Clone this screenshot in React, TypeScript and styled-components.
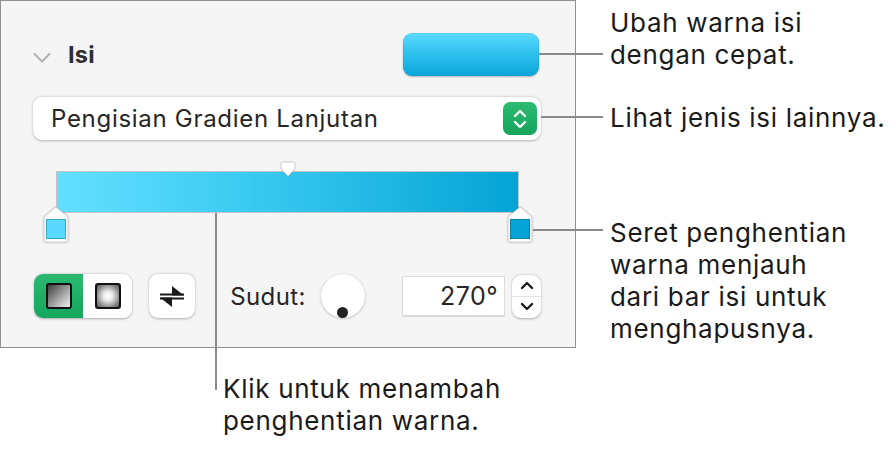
import React from "react";
import styled, { createGlobalStyle } from "styled-components";

const GlobalStyle = createGlobalStyle`
  html, body { margin: 0; padding: 0; background: #ffffff; }
  body { font-family: Inter, "Noto Sans", "Liberation Sans", sans-serif; -webkit-font-smoothing: antialiased; }
`;

const Stage = styled.div`
  position: relative;
  width: 894px;
  height: 452px;
  display: grid;
  grid-template-columns: 576px 1fr;
  grid-template-rows: 348px 1fr;
  overflow: hidden;
`;

const Panel = styled.section`
  box-sizing: border-box;
  grid-column: 1;
  grid-row: 1;
  background: #f5f5f5;
  border: 1px solid #8f8f8f;
  padding: 32px 34px 0 32px;
  display: flex;
  flex-direction: column;
`;

const Header = styled.div`
  display: flex;
  align-items: center;
  height: 43px;
`;

const Disclosure = styled.svg`
  width: 18px;
  height: 12px;
  margin-right: 17px;
  margin-top: 6px;
`;

const Title = styled.h2`
  margin: 0;
  font-size: 23.5px;
  font-weight: 700;
  color: #2f2f2f;
  letter-spacing: 0.2px;
`;

const ColorWell = styled.button`
  margin-left: auto;
  margin-right: 2px;
  width: 136px;
  height: 43px;
  border: none;
  border-radius: 9px;
  background: linear-gradient(180deg, #5bdafd 0%, #2cc0ee 50%, #0aa6da 100%);
  box-shadow: 0 1px 2px rgba(0, 0, 0, 0.28), inset 0 0 0 0.5px rgba(0, 0, 0, 0.08);
`;

const Popup = styled.div`
  margin-top: 21px;
  height: 43px;
  box-sizing: border-box;
  background: #ffffff;
  border-radius: 9px;
  box-shadow: 0 0.5px 2.5px rgba(0, 0, 0, 0.28);
  display: flex;
  align-items: center;
  padding: 0 4px 0 18px;
`;

const PopupLabel = styled.span`
  flex: 1;
  font-size: 24px;
  color: #262626;
  letter-spacing: 0.7px;
`;

const PopupArrows = styled.div`
  width: 34px;
  height: 33px;
  border-radius: 7px;
  background: linear-gradient(180deg, #2dbb73 0%, #16a35a 100%);
  display: flex;
  align-items: center;
  justify-content: center;
`;

const GradientEditor = styled.div`
  margin-top: 21px;
  padding-top: 10px;
  display: flex;
  flex-direction: column;
`;

const BarWrap = styled.div`
  position: relative;
  margin: 0 22px 0 23px;
`;

const Bar = styled.div`
  height: 42px;
  box-sizing: border-box;
  border: 1px solid #c4c4c4;
  background: linear-gradient(90deg, #64e0ff 0%, #3ccbf1 40%, #05a4d5 100%);
`;

const MidMarker = styled.svg`
  position: absolute;
  left: 50%;
  top: -10px;
  width: 16px;
  height: 16px;
  transform: translateX(-50%);
`;

const StopsRow = styled.div`
  margin: -7px 8px 0 10px;
  display: flex;
  justify-content: space-between;
`;

const Stop = styled.svg`
  width: 26px;
  height: 37px;
  display: block;
  filter: drop-shadow(0 0.5px 0.8px rgba(0, 0, 0, 0.2));
`;

const Controls = styled.div`
  margin-top: 31px;
  height: 44px;
  display: flex;
  align-items: center;
`;

const Segmented = styled.div`
  margin-left: 1px;
  width: 99px;
  height: 44px;
  border-radius: 9px;
  background: #ffffff;
  box-shadow: 0 0.5px 2.5px rgba(0, 0, 0, 0.3);
  display: flex;
  overflow: hidden;
`;

const Segment = styled.div<{ $active?: boolean }>`
  flex: 1;
  display: flex;
  align-items: center;
  justify-content: center;
  background: ${(p) => (p.$active ? "linear-gradient(180deg, #2bb871 0%, #17a65d 100%)" : "#ffffff")};
`;

const Swatch = styled.div<{ $kind: "linear" | "radial" }>`
  width: 22px;
  height: 22px;
  border: 2.5px solid #111111;
  border-radius: 3px;
  background: ${(p) =>
    p.$kind === "linear"
      ? "linear-gradient(135deg, #3e3e3e 0%, #9a9a9a 50%, #f2f2f2 100%)"
      : "radial-gradient(circle at 50% 50%, #ffffff 0%, #e8e8e8 30%, #7a7a7a 80%, #4a4a4a 100%)"};
`;

const IconButton = styled.button`
  margin-left: 17px;
  width: 46px;
  height: 44px;
  padding: 0;
  border: none;
  border-radius: 9px;
  background: #ffffff;
  box-shadow: 0 0.5px 2.5px rgba(0, 0, 0, 0.3);
  display: flex;
  align-items: center;
  justify-content: center;
`;

const Label = styled.span`
  margin-left: 35px;
  font-size: 24px;
  color: #262626;
  letter-spacing: 0.4px;
`;

const Knob = styled.div`
  position: relative;
  margin-left: 15px;
  width: 44px;
  height: 44px;
  border-radius: 50%;
  background: #ffffff;
  box-shadow: 0 0.5px 2.5px rgba(0, 0, 0, 0.3);
`;

const KnobDot = styled.span`
  position: absolute;
  left: 50%;
  top: 33px;
  width: 11px;
  height: 11px;
  margin-left: -5.5px;
  border-radius: 50%;
  background: #222222;
`;

const NumberField = styled.div`
  margin-left: 37px;
  width: 104px;
  height: 40px;
  box-sizing: border-box;
  background: #ffffff;
  border: 1px solid #dcdcdc;
  box-shadow: 0 0.5px 1px rgba(0, 0, 0, 0.12);
  display: flex;
  align-items: center;
  justify-content: flex-end;
  padding-right: 6px;
  font-size: 25px;
  letter-spacing: 0.5px;
  color: #262626;
`;

const Stepper = styled.div`
  margin-left: 7px;
  width: 29px;
  height: 43px;
  border-radius: 9px;
  background: #ffffff;
  box-shadow: 0 0.5px 2.5px rgba(0, 0, 0, 0.3);
  display: flex;
  flex-direction: column;
  overflow: hidden;
`;

const StepHalf = styled.div<{ $top?: boolean }>`
  flex: 1;
  display: flex;
  align-items: center;
  justify-content: center;
  border-bottom: ${(p) => (p.$top ? "1px solid #e4e4e4" : "none")};
`;

const CalloutColumn = styled.div`
  grid-column: 2;
  grid-row: 1 / span 2;
  padding-left: 34px;
  display: flex;
  flex-direction: column;
`;

const Callout = styled.p<{ $top: number }>`
  margin: ${(p) => p.$top}px 0 0 0;
  font-size: 26px;
  line-height: 32px;
  color: #1a1a1a;
  letter-spacing: 0.7px;
  white-space: nowrap;
`;

const BottomCallout = styled.div`
  grid-column: 1;
  grid-row: 2;
  padding: 25px 0 0 223px;
`;

const Leaders = styled.svg`
  position: absolute;
  left: 0;
  top: 0;
  width: 894px;
  height: 452px;
  pointer-events: none;
`;

function ColorStop({ fill, edge }: { fill: string; edge: string }) {
  return (
    <Stop viewBox="0 0 26 37">
      <path
        d="M13 1 L25 11 L25 34 Q25 36 23 36 L3 36 Q1 36 1 34 L1 11 Z"
        fill="#ffffff"
        stroke="#cfcfcf"
        strokeWidth="1"
      />
      <rect x="3.5" y="13.5" width="19" height="19" fill={fill} stroke={edge} strokeWidth="1" />
    </Stop>
  );
}

export default function App() {
  return (
    <>
      <GlobalStyle />
      <Stage>
        <Panel>
          <Header>
            <Disclosure viewBox="0 0 18 12">
              <path d="M1.5 2 L9 9.5 L16.5 2" fill="none" stroke="#b0b0b0" strokeWidth="2" strokeLinecap="round" strokeLinejoin="round" />
            </Disclosure>
            <Title>Isi</Title>
            <ColorWell aria-label="Warna isi" />
          </Header>

          <Popup>
            <PopupLabel>Pengisian Gradien Lanjutan</PopupLabel>
            <PopupArrows>
              <svg width="16" height="24" viewBox="0 0 16 24">
                <path d="M3 9 L8 4 L13 9" fill="none" stroke="#ffffff" strokeWidth="2.4" strokeLinecap="round" strokeLinejoin="round" />
                <path d="M3 15 L8 20 L13 15" fill="none" stroke="#ffffff" strokeWidth="2.4" strokeLinecap="round" strokeLinejoin="round" />
              </svg>
            </PopupArrows>
          </Popup>

          <GradientEditor>
            <BarWrap>
              <Bar />
              <MidMarker viewBox="0 0 16 16">
                <path
                  d="M3 1 L13 1 Q15 1 15 3 L15 8 L8 15 L1 8 L1 3 Q1 1 3 1 Z"
                  fill="#ffffff"
                  stroke="#c8c8c8"
                  strokeWidth="1"
                />
              </MidMarker>
            </BarWrap>
            <StopsRow>
              <ColorStop fill="#5ad9fd" edge="#2fa9ca" />
              <ColorStop fill="#05a3d6" edge="#0a7ea6" />
            </StopsRow>
          </GradientEditor>

          <Controls>
            <Segmented>
              <Segment $active>
                <Swatch $kind="linear" />
              </Segment>
              <Segment>
                <Swatch $kind="radial" />
              </Segment>
            </Segmented>
            <IconButton aria-label="Balik warna">
              <svg width="26" height="26" viewBox="0 0 26 26">
                <path d="M1 11.5 H25" stroke="#1a1a1a" strokeWidth="2" />
                <path d="M13 3 L25 12.5 L13 12.5 Z" fill="#1a1a1a" />
                <path d="M1 15.5 H25" stroke="#1a1a1a" strokeWidth="2" />
                <path d="M13 24 L1 14.5 L13 14.5 Z" fill="#1a1a1a" />
              </svg>
            </IconButton>
            <Label>Sudut:</Label>
            <Knob>
              <KnobDot />
            </Knob>
            <NumberField>270°</NumberField>
            <Stepper>
              <StepHalf $top>
                <svg width="14" height="10" viewBox="0 0 14 10">
                  <path d="M2 8 L7 3 L12 8" fill="none" stroke="#1a1a1a" strokeWidth="2.4" strokeLinecap="round" strokeLinejoin="round" />
                </svg>
              </StepHalf>
              <StepHalf>
                <svg width="14" height="10" viewBox="0 0 14 10">
                  <path d="M2 2 L7 7 L12 2" fill="none" stroke="#1a1a1a" strokeWidth="2.4" strokeLinecap="round" strokeLinejoin="round" />
                </svg>
              </StepHalf>
            </Stepper>
          </Controls>
        </Panel>

        <CalloutColumn>
          <Callout $top={7}>
            Ubah warna isi
            <br />
            dengan cepat.
          </Callout>
          <Callout $top={31}>Lihat jenis isi lainnya.</Callout>
          <Callout $top={83}>
            Seret penghentian
            <br />
            warna menjauh
            <br />
            dari bar isi untuk
            <br />
            menghapusnya.
          </Callout>
        </CalloutColumn>

        <BottomCallout>
          <Callout $top={0}>
            Klik untuk menambah
            <br />
            penghentian warna.
          </Callout>
        </BottomCallout>

        <Leaders viewBox="0 0 894 452">
          <g stroke="#8a8a8a" strokeWidth="2" fill="none">
            <path d="M539 54 H603" />
            <path d="M541 117 H603" />
            <path d="M533 230 H603" />
            <path d="M216 213 V390" />
          </g>
        </Leaders>
      </Stage>
    </>
  );
}
